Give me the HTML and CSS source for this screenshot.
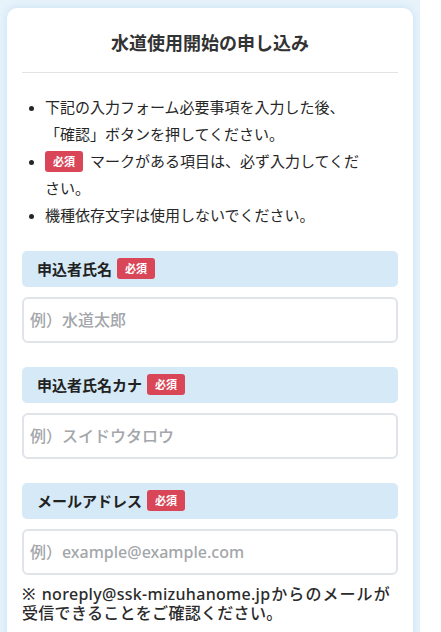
FILE: index.html
```html
<!DOCTYPE html>
<html lang="ja">
<head>
  <meta charset="UTF-8">
  <meta name="viewport" content="width=device-width, initial-scale=1.0">
  <title>水道使用開始の申し込み</title>
  <link rel="stylesheet" href="styles.css">
</head>
<body>
  <div class="page">
    <div class="card">
      <h1 class="card-title">水道使用開始の申し込み</h1>

      <ul class="notes">
        <li>下記の入力フォーム必要事項を入力した後、<br>「確認」ボタンを押してください。</li>
        <li><span class="badge">必須</span> マークがある項目は、必ず入力してください。</li>
        <li>機種依存文字は使用しないでください。</li>
      </ul>

      <div class="field">
        <label class="field-label" for="name">申込者氏名<span class="badge">必須</span></label>
        <input class="field-input" id="name" type="text" placeholder="例）水道太郎">
      </div>

      <div class="field">
        <label class="field-label" for="kana">申込者氏名カナ<span class="badge">必須</span></label>
        <input class="field-input" id="kana" type="text" placeholder="例）スイドウタロウ">
      </div>

      <div class="field">
        <label class="field-label" for="mail">メールアドレス<span class="badge">必須</span></label>
        <input class="field-input" id="mail" type="email" placeholder="例）example@example.com">
        <p class="field-note">※ noreply@ssk-mizuhanome.jpからのメールが受信できることをご確認ください。</p>
      </div>
    </div>
  </div>
</body>
</html>
```

FILE: styles.css
```css
* {
  margin: 0;
  padding: 0;
  box-sizing: border-box;
}
body {
  background: #fff;
  font-family: "Noto Sans", "Noto Sans CJK JP", sans-serif;
  color: #2b2b2b;
}
.page {
  width: 420px;
  min-height: 632px;
  padding: 8px 7px;
  background: #e7f3fb;
}
.card {
  background: #fff;
  border-radius: 10px;
  box-shadow: 0 0 8px rgba(160, 205, 235, 0.45);
  padding: 0 15px 20px;
}
.card-title {
  font-size: 18px;
  font-weight: 700;
  line-height: 27px;
  text-align: center;
  color: #333;
  padding: 22px 0 15px;
  border-bottom: 1px solid #e3e3e3;
}
.notes {
  margin: 21px 0 22px;
  padding: 0 30px 0 23px;
  font-size: 15px;
  line-height: 26.5px;
  color: #262626;
}
.notes li {
  margin-bottom: 1px;
}
.notes li::marker {
  font-size: 13px;
}
.badge {
  display: inline-block;
  vertical-align: 1px;
  background: #d94658;
  color: #fff;
  font-size: 11px;
  font-weight: 700;
  line-height: 21px;
  padding: 0 8px;
  border-radius: 3px;
}
.notes .badge {
  margin-right: 3px;
}
.field {
  margin-bottom: 24px;
}
.field-label {
  display: flex;
  align-items: center;
  gap: 5px;
  height: 36px;
  padding-left: 15px;
  background: #d5e9f7;
  border-radius: 5px;
  font-size: 15px;
  font-weight: 700;
  color: #222;
  margin-bottom: 10px;
}
.field-input {
  display: block;
  width: 100%;
  height: 46px;
  padding: 0 6px;
  border: 2px solid #e0e3e7;
  border-radius: 6px;
  font-family: "Noto Sans", "Noto Sans CJK JP", sans-serif;
  font-size: 16px;
  font-weight: 500;
  color: #333;
  background: #fff;
}
.field-input::placeholder {
  color: #a3a6aa;
}
.field-note {
  margin-top: 10px;
  padding-right: 8px;
  font-size: 16px;
  font-weight: 500;
  line-height: 19px;
  letter-spacing: 0.3px;
  text-align: justify;
  text-justify: inter-character;
  color: #2b2b2b;
}
```
